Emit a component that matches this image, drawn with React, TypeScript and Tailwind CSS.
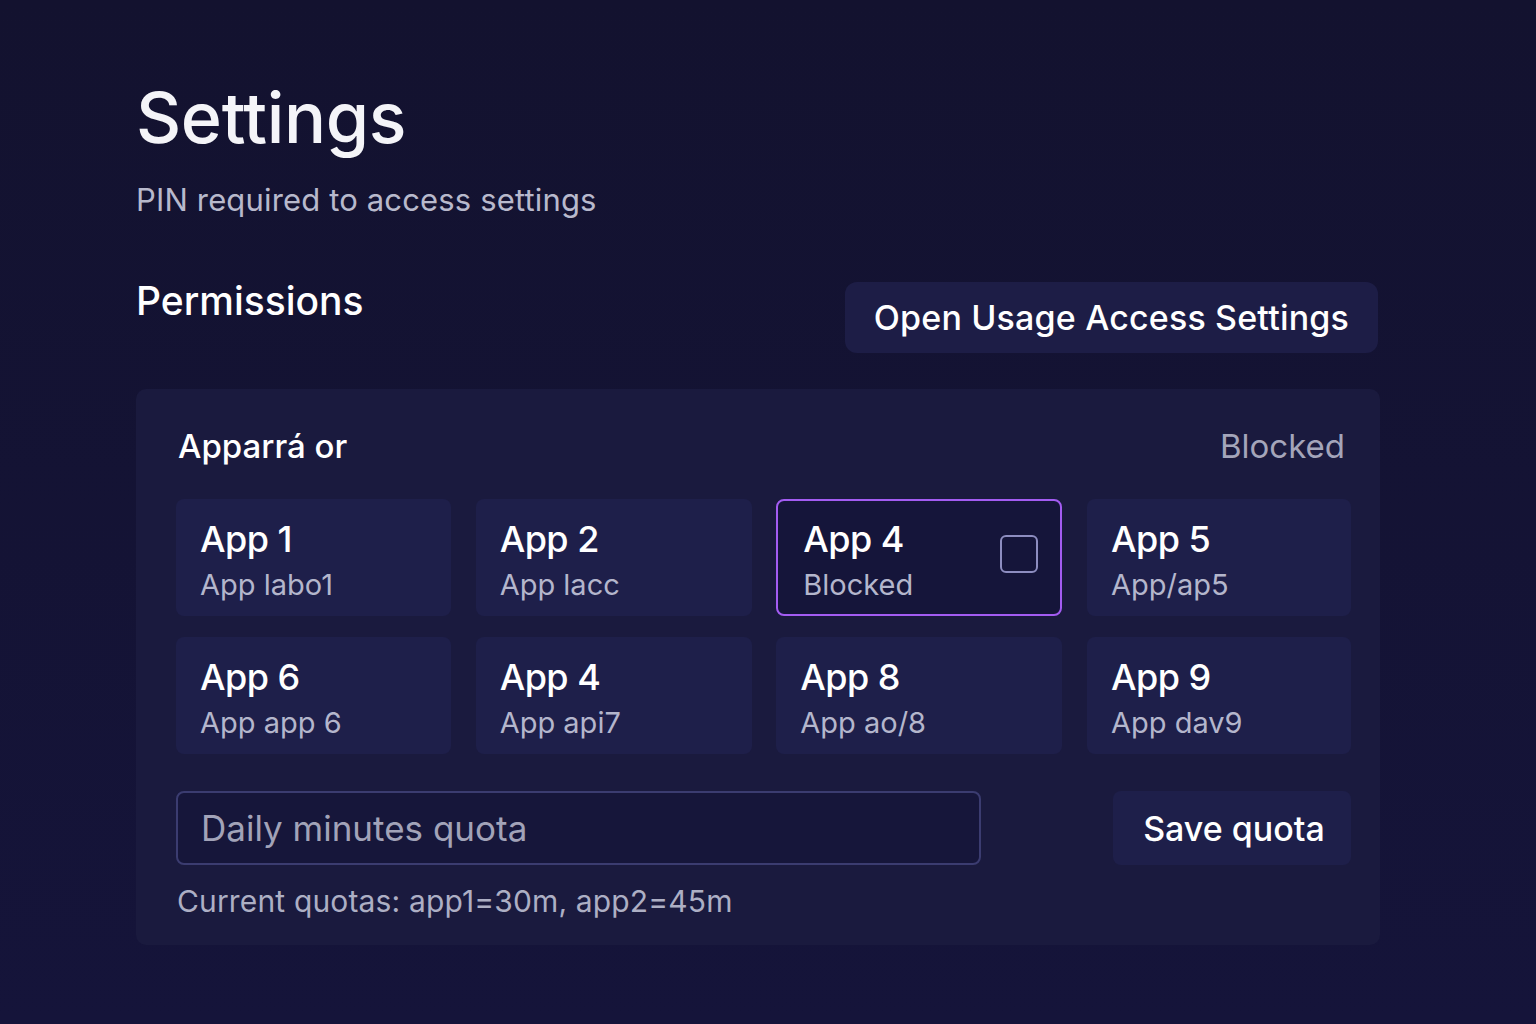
import { useState } from "react";

type AppItem = { name: string; sub: string };

const apps: AppItem[] = [
  { name: "App 1", sub: "App labo1" },
  { name: "App 2", sub: "App lacc" },
  { name: "App 4", sub: "Blocked" },
  { name: "App 5", sub: "App/ap5" },
  { name: "App 6", sub: "App app 6" },
  { name: "App 4", sub: "App api7" },
  { name: "App 8", sub: "App ao/8" },
  { name: "App 9", sub: "App dav9" },
];

function AppCard({ app, selected }: { app: AppItem; selected: boolean }) {
  return (
    <div
      className={`relative h-[117px] rounded-lg ${
        selected ? "border-2 border-[#a35cf2] bg-[#15153a] pl-[25px] pt-[17px]" : "bg-[#1e1f4a] pl-6 pt-[19px]"
      }`}
    >
      <div className="text-[36px] font-medium leading-[43px] tracking-[-0.015em] text-white">{app.name}</div>
      <div className="mt-[6px] text-[29px] leading-[35px] text-[#b4b6cc]">{app.sub}</div>
      {selected ? (
        <div className="absolute right-[22px] top-[34px] h-[38px] w-[38px] rounded-md border-2 border-[#8d8dc0] bg-[#15153a]" />
      ) : null}
    </div>
  );
}

export default function App() {
  const [quota, setQuota] = useState("");

  return (
    <div className="min-h-[1024px] bg-[linear-gradient(180deg,#13122f,#15143a)] pl-[136px] pt-[79px] font-['Inter','Noto_Sans',sans-serif]">
      <div className="w-[1244px]">
        <h1 className="text-[70px] font-medium leading-[1.1] tracking-[-0.005em] text-[#f4f4f8]">Settings</h1>
        <p className="mt-[26px] text-[31px] leading-[36px] tracking-[0.005em] text-[#b8b9cc]">PIN required to access settings</p>

        <div className="mt-[60px] flex items-start justify-between">
          <h2 className="text-[39px] font-medium leading-[46px] text-white">Permissions</h2>
          <button
            type="button"
            className="mr-[2px] mt-[4px] h-[71px] rounded-xl bg-[#1d1d46] px-[29px] text-[34px] font-medium tracking-[0.005em] text-white"
          >
            Open Usage Access Settings
          </button>
        </div>

        <div className="mt-[36px] rounded-[10px] bg-[#1a1a3e] pb-[27px] pl-10 pr-[29px] pt-[37px]">
          <div className="flex items-center justify-between pl-[2px] pr-[6px]">
            <span className="text-[33px] font-medium leading-[40px] text-white">Apparrá or</span>
            <span className="text-[33px] leading-[40px] text-[#a4a5ba]">Blocked</span>
          </div>

          <div className="mt-[33px] grid grid-cols-[275px_276px_286px_264px] justify-between gap-y-[21px]">
            {apps.map((app, i) => (
              <AppCard key={i} app={app} selected={i === 2} />
            ))}
          </div>

          <div className="mt-[37px] flex items-center justify-between">
            <input
              value={quota}
              onChange={(e) => setQuota(e.target.value)}
              placeholder="Daily minutes quota"
              className="h-[74px] w-[805px] rounded-lg border-2 border-[#3b3c70] bg-[#16163a] px-[23px] text-[35px] text-white outline-none placeholder:text-[#a2a3b8]"
            />
            <button
              type="button"
              className="h-[74px] w-[238px] rounded-lg bg-[#1e1f4a] pl-[4px] text-[34px] font-medium text-white"
            >
              Save quota
            </button>
          </div>

          <p className="mt-[19px] pl-[1px] text-[30px] leading-[34px] tracking-[0.005em] text-[#adafc4]">
            Current quotas: app1=30m, app2=45m
          </p>
        </div>
      </div>
    </div>
  );
}
